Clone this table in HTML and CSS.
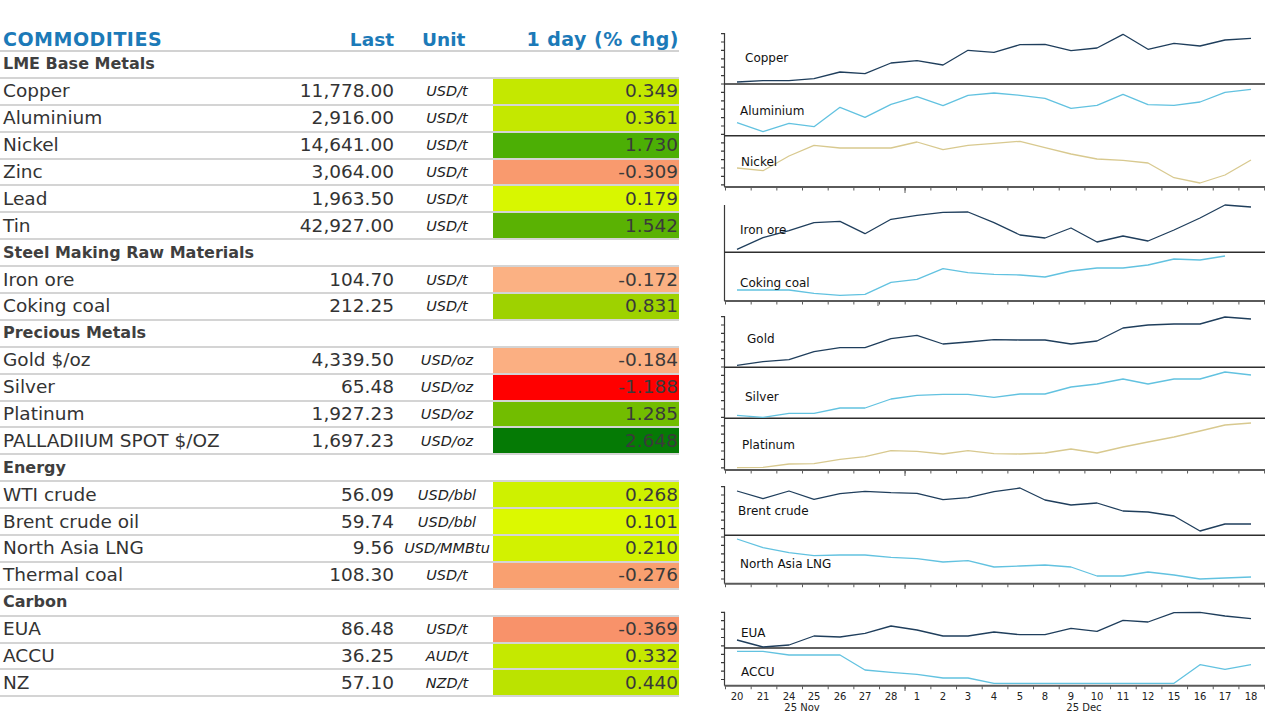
FILE: index.html
```html
<!DOCTYPE html>
<html lang="en">
<head>
<meta charset="utf-8">
<title>Commodities</title>
<link rel="stylesheet" href="styles.css">
</head>
<body>
<div class="page">
  <table class="commod">
    <colgroup><col class="w-name"><col class="w-last"><col class="w-unit"><col class="w-chg"></colgroup>
    <thead>
      <tr><th class="c-name">COMMODITIES</th><th class="c-last">Last</th><th class="c-unit">Unit</th><th class="c-chg">1 day (% chg)</th></tr>
    </thead>
    <tbody>
      <tr class="section"><td colspan="4">LME Base Metals</td></tr>
      <tr><td class="c-name">Copper</td><td class="c-last">11,778.00</td><td class="c-unit">USD/t</td><td class="c-chg" style="background:#c4e800">0.349</td></tr>
      <tr><td class="c-name">Aluminium</td><td class="c-last">2,916.00</td><td class="c-unit">USD/t</td><td class="c-chg" style="background:#c4e800">0.361</td></tr>
      <tr><td class="c-name">Nickel</td><td class="c-last">14,641.00</td><td class="c-unit">USD/t</td><td class="c-chg" style="background:#4caf05">1.730</td></tr>
      <tr><td class="c-name">Zinc</td><td class="c-last">3,064.00</td><td class="c-unit">USD/t</td><td class="c-chg" style="background:#f99a6e">-0.309</td></tr>
      <tr><td class="c-name">Lead</td><td class="c-last">1,963.50</td><td class="c-unit">USD/t</td><td class="c-chg" style="background:#d8f700">0.179</td></tr>
      <tr><td class="c-name">Tin</td><td class="c-last">42,927.00</td><td class="c-unit">USD/t</td><td class="c-chg" style="background:#5ab203">1.542</td></tr>
      <tr class="section"><td colspan="4">Steel Making Raw Materials</td></tr>
      <tr><td class="c-name">Iron ore</td><td class="c-last">104.70</td><td class="c-unit">USD/t</td><td class="c-chg" style="background:#fbb183">-0.172</td></tr>
      <tr><td class="c-name">Coking coal</td><td class="c-last">212.25</td><td class="c-unit">USD/t</td><td class="c-chg" style="background:#9ed200">0.831</td></tr>
      <tr class="section"><td colspan="4">Precious Metals</td></tr>
      <tr><td class="c-name">Gold $/oz</td><td class="c-last">4,339.50</td><td class="c-unit">USD/oz</td><td class="c-chg" style="background:#fbaf82">-0.184</td></tr>
      <tr><td class="c-name">Silver</td><td class="c-last">65.48</td><td class="c-unit">USD/oz</td><td class="c-chg" style="background:#ff0000">-1.188</td></tr>
      <tr><td class="c-name">Platinum</td><td class="c-last">1,927.23</td><td class="c-unit">USD/oz</td><td class="c-chg" style="background:#72bd00">1.285</td></tr>
      <tr><td class="c-name">PALLADIIUM SPOT $/OZ</td><td class="c-last">1,697.23</td><td class="c-unit">USD/oz</td><td class="c-chg" style="background:#057a05">2.648</td></tr>
      <tr class="section"><td colspan="4">Energy</td></tr>
      <tr><td class="c-name">WTI crude</td><td class="c-last">56.09</td><td class="c-unit">USD/bbl</td><td class="c-chg" style="background:#cef100">0.268</td></tr>
      <tr><td class="c-name">Brent crude oil</td><td class="c-last">59.74</td><td class="c-unit">USD/bbl</td><td class="c-chg" style="background:#dcf900">0.101</td></tr>
      <tr><td class="c-name">North Asia LNG</td><td class="c-last">9.56</td><td class="c-unit">USD/MMBtu</td><td class="c-chg" style="background:#d2f200">0.210</td></tr>
      <tr><td class="c-name">Thermal coal</td><td class="c-last">108.30</td><td class="c-unit">USD/t</td><td class="c-chg" style="background:#f9a070">-0.276</td></tr>
      <tr class="section"><td colspan="4">Carbon</td></tr>
      <tr><td class="c-name">EUA</td><td class="c-last">86.48</td><td class="c-unit">USD/t</td><td class="c-chg" style="background:#f8926a">-0.369</td></tr>
      <tr><td class="c-name">ACCU</td><td class="c-last">36.25</td><td class="c-unit">AUD/t</td><td class="c-chg" style="background:#c5e900">0.332</td></tr>
      <tr><td class="c-name">NZ</td><td class="c-last">57.10</td><td class="c-unit">NZD/t</td><td class="c-chg" style="background:#bbe300">0.440</td></tr>
    </tbody>
  </table>

  <div class="charts">
    <!-- Panel 1: Copper / Aluminium / Nickel -->
    <svg class="panel p1" viewBox="0 0 554 168" width="554" height="168">
      <line class="yaxis" x1="8.5" y1="5" x2="8.5" y2="159"/>
      <line class="yticks" x1="6.5" y1="5" x2="6.5" y2="159"/>
      <line class="sep" x1="8.5" y1="56" x2="549" y2="56"/>
      <line class="sep" x1="8.5" y1="107.7" x2="549" y2="107.7"/>
      <line class="xaxis" x1="8.5" y1="159" x2="549" y2="159"/>
      <line class="xticks" x1="9" y1="161" x2="549" y2="161"/>
      <line class="xlong" x1="189" y1="159" x2="189" y2="165"/>
      <polyline class="s-navy" points="21,54 47,52.7 73,52.7 98,50.7 124,44 149,45.7 175,35 201,32.7 227,37 252,22.3 278,24.3 304,16.7 329,16.3 355,22.7 381,20 407,6.3 432,21.3 458,15.3 484,18 509,12 535,10.3"/>
      <polyline class="s-blue" points="21,94.7 47,103.7 73,95.3 98,98.7 124,79.3 149,89.3 175,76.3 201,68.7 227,77.7 252,67.3 278,65 304,67.3 329,70.3 355,80.3 381,77.3 407,66.3 432,76.7 458,77.3 484,74 509,64.3 535,61.3"/>
      <polyline class="s-khaki" points="21,140 47,142.7 73,128 98,117.3 124,120 149,120 175,120 201,114 227,121.7 252,117.3 278,115.3 304,113.3 329,119.7 355,126 381,131 407,132.3 432,135 458,149.7 484,155 509,147 535,132"/>
      <text class="lbl" x="29" y="33.5">Copper</text>
      <text class="lbl" x="24" y="86.5">Aluminium</text>
      <text class="lbl" x="25" y="137.5">Nickel</text>
    </svg>

    <!-- Panel 2: Iron ore / Coking coal -->
    <svg class="panel p2" viewBox="0 0 554 110" width="554" height="110">
      <line class="yaxis" x1="8.5" y1="9" x2="8.5" y2="105"/>
      <line class="sep" x1="8.5" y1="56.3" x2="549" y2="56.3"/>
      <line class="xaxis" x1="8.5" y1="105" x2="549" y2="105"/>
      <line class="xticks" x1="9" y1="107" x2="549" y2="107"/>
      <line class="xlong" x1="162" y1="105" x2="162" y2="110"/>
      <polyline class="s-navy" points="21,53.3 47,41.7 73,34.7 98,26.7 124,25.3 149,37.7 175,23.3 201,19.3 227,16.3 252,16 278,26.7 304,39 329,42 355,32 381,46 407,40 432,45 458,34 484,22 509,9 535,11"/>
      <polyline class="s-blue" points="21,94 47,94 73,94 98,97.3 124,99.3 149,98.3 175,86.3 201,83.3 227,72.7 252,76.7 278,78.3 304,79 329,81 355,75 381,72 407,72 432,69 458,63 484,64 509,60"/>
      <text class="lbl" x="24" y="37.5">Iron ore</text>
      <text class="lbl" x="24" y="90.5">Coking coal</text>
    </svg>

    <!-- Panel 3: Gold / Silver / Platinum -->
    <svg class="panel p3" viewBox="0 0 554 172" width="554" height="172">
      <line class="yaxis" x1="8.5" y1="10" x2="8.5" y2="164"/>
      <line class="yticks" x1="6.5" y1="10" x2="6.5" y2="164"/>
      <line class="sep" x1="8.5" y1="61.3" x2="549" y2="61.3"/>
      <line class="sep" x1="8.5" y1="112.3" x2="549" y2="112.3"/>
      <line class="xaxis" x1="8.5" y1="164" x2="549" y2="164"/>
      <line class="xticks" x1="9" y1="166" x2="549" y2="166"/>
      <line class="xlong" x1="189" y1="164" x2="189" y2="170"/>
      <polyline class="s-navy" points="21,59.3 47,55.7 73,53.7 98,45.7 124,41.7 149,41.7 175,32.7 201,29.3 227,38 252,36 278,33.7 304,34 329,34 355,38 381,35 407,22 432,19 458,18 484,18 509,11 535,13"/>
      <polyline class="s-blue" points="21,109.3 47,111.3 73,107.3 98,107.3 124,102 149,102 175,93 201,89.3 227,88.3 252,88.3 278,91.3 304,88 329,88 355,81 381,78 407,73 432,78 458,73 484,73 509,66 535,69"/>
      <polyline class="s-khaki" points="21,161.7 47,161.3 73,158 98,157.7 124,153.3 149,150.7 175,144.7 201,145.3 227,148 252,144.7 278,147.7 304,148 329,147 355,143 381,147 407,141 432,136 458,131 484,125 509,119 535,117"/>
      <text class="lbl" x="31" y="36.5">Gold</text>
      <text class="lbl" x="29" y="94.5">Silver</text>
      <text class="lbl" x="26" y="142.5">Platinum</text>
    </svg>

    <!-- Panel 4: Brent crude / North Asia LNG -->
    <svg class="panel p4" viewBox="0 0 554 120" width="554" height="120">
      <line class="yaxis" x1="8.5" y1="8" x2="8.5" y2="105.7"/>
      <line class="yticks" x1="6.5" y1="8" x2="6.5" y2="105.7"/>
      <line class="sep" x1="8.5" y1="57.3" x2="549" y2="57.3"/>
      <line class="xaxis" x1="8.5" y1="105.7" x2="549" y2="105.7"/>
      <line class="xticks" x1="9" y1="107.7" x2="549" y2="107.7"/>
      <line class="xlong" x1="189" y1="105.7" x2="189" y2="111"/>
      <polyline class="s-navy" points="21,13 47,20.7 73,13 98,21.3 124,15.7 149,13.3 175,14.7 201,15.3 227,21.7 252,19.7 278,13.7 304,10 329,22 355,27 381,25 407,33 432,34 458,38 484,53 509,46 535,46"/>
      <polyline class="s-blue" points="21,61 47,69.7 73,74.7 98,77.7 124,77 149,77 175,79.3 201,80.7 227,84 252,82.7 278,89 304,88 329,87 355,89 381,98 407,98 432,94 458,97 484,101 509,100 535,99"/>
      <text class="lbl" x="22" y="36.5">Brent crude</text>
      <text class="lbl" x="24" y="89.5">North Asia LNG</text>
    </svg>

    <!-- Panel 5: EUA / ACCU with date axis -->
    <svg class="panel p5" viewBox="0 0 554 122" width="554" height="122">
      <line class="yaxis" x1="8.5" y1="13.7" x2="8.5" y2="87.7"/>
      <line class="yticks" x1="6.5" y1="13.7" x2="6.5" y2="87.7"/>
      <line class="sep" x1="8.5" y1="50" x2="549" y2="50"/>
      <line class="xaxis" x1="8.5" y1="87.7" x2="549" y2="87.7"/>
      <line class="xticks" x1="9" y1="89.7" x2="549" y2="89.7"/>
      <line class="xlong" x1="189" y1="87.7" x2="189" y2="93"/>
      <polyline class="s-navy" points="21,42 47,49 73,47 98,38 124,39 149,35.3 175,28 201,32 227,38 252,38 278,34 304,36.7 329,36.7 355,30.3 381,33.3 407,22.3 432,24 458,14.7 484,14.3 509,18 535,20.7"/>
      <polyline class="s-blue" points="21,53.3 47,53.3 73,57 98,57 124,57 149,72 175,74.3 201,76.3 227,80 252,80 278,85.3 304,85.3 329,85.3 355,85.3 381,85.3 407,85.3 432,85.3 458,85.3 484,66.7 509,71.3 535,66.7"/>
      <text class="lbl" x="25" y="38.5">EUA</text>
      <text class="lbl" x="25" y="77.5">ACCU</text>
      <g class="tick-lbl">
        <text x="21" y="101.5">20</text><text x="47" y="101.5">21</text><text x="73" y="101.5">24</text><text x="98" y="101.5">25</text>
        <text x="124" y="101.5">26</text><text x="149" y="101.5">27</text><text x="175" y="101.5">28</text><text x="201" y="101.5">1</text>
        <text x="227" y="101.5">2</text><text x="252" y="101.5">3</text><text x="278" y="101.5">4</text><text x="304" y="101.5">5</text>
        <text x="329" y="101.5">8</text><text x="355" y="101.5">9</text><text x="381" y="101.5">10</text><text x="407" y="101.5">11</text>
        <text x="432" y="101.5">12</text><text x="458" y="101.5">15</text><text x="484" y="101.5">16</text><text x="509" y="101.5">17</text>
        <text x="535" y="101.5">18</text>
        <text x="86" y="113">25 Nov</text>
        <text x="368" y="113">25 Dec</text>
      </g>
    </svg>
  </div>
</div>
</body>
</html>
```

FILE: styles.css
```css
html, body {
  margin: 0;
  padding: 0;
  background: #ffffff;
}

body {
  width: 1280px;
  height: 720px;
  overflow: hidden;
  font-family: "DejaVu Sans", Verdana, sans-serif;
  color: #333333;
}

.page {
  display: flex;
  align-items: flex-start;
}

/* ---------- table ---------- */
.commod {
  width: 679px;
  margin-top: 29px;
  border-collapse: collapse;
  table-layout: fixed;
}

.w-name { width: 290px; }
.w-last { width: 111px; }
.w-unit { width: 92px; }
.w-chg  { width: 186px; }

.commod th {
  height: 21px;
  padding: 0;
  font-size: 18.5px;
  font-weight: bold;
  line-height: 21px;
  color: #1c7ab8;
  border-bottom: 2px solid #d2d2d2;
  white-space: nowrap;
}

.commod th.c-name,
.commod th.c-chg {
  font-size: 19px;
  letter-spacing: 0.5px;
}

.commod td {
  height: 24.9px;
  padding: 0;
  font-size: 18.5px;
  line-height: 24px;
  color: #333333;
  border-bottom: 2px solid #d4d4d4;
  white-space: nowrap;
  vertical-align: middle;
}

.commod .c-name { text-align: left; padding-left: 3px; }
.commod .c-last { text-align: right; padding-right: 7px; }
.commod .c-unit { text-align: center; }
.commod th.c-unit { text-align: left; padding-left: 21px; }
.commod td.c-unit {
  font-size: 14.5px;
  font-style: italic;
  color: #222222;
}
.commod .c-chg { text-align: right; padding-right: 1px; }
.commod th.c-chg { padding-right: 0; }
.commod td.c-chg { color: #3a3a3a; }

.commod .section td {
  font-size: 16px;
  font-weight: bold;
  color: #3f3f3f;
  padding-left: 3px;
}

/* ---------- charts ---------- */
.charts {
  margin-left: 37px;
  margin-top: 28px;
  width: 554px;
  display: flex;
  flex-direction: column;
}

.panel {
  display: block;
  overflow: visible;
}

.yaxis {
  stroke: #3a3a3a;
  stroke-width: 1.2;
}

.yticks {
  stroke: #3a3a3a;
  stroke-width: 3;
  stroke-dasharray: 1.2 7.2;
}

.sep {
  stroke: #2e2e2e;
  stroke-width: 1.6;
}

.xaxis {
  stroke: #5a5a5a;
  stroke-width: 2;
}

.xticks {
  stroke: #5a5a5a;
  stroke-width: 3;
  stroke-dasharray: 1 24.67;
}

.xlong {
  stroke: #5a5a5a;
  stroke-width: 1;
}

.s-navy, .s-blue, .s-khaki {
  fill: none;
  stroke-width: 1.3;
  stroke-linejoin: round;
}
.s-navy  { stroke: #1f3e5c; }
.s-blue  { stroke: #62c2e0; }
.s-khaki { stroke: #d8c98f; }

.lbl {
  font-family: "DejaVu Sans", Verdana, sans-serif;
  font-size: 12px;
  fill: #111111;
}

.tick-lbl text {
  font-family: "DejaVu Sans", Verdana, sans-serif;
  font-size: 10px;
  fill: #222222;
  text-anchor: middle;
}
```
